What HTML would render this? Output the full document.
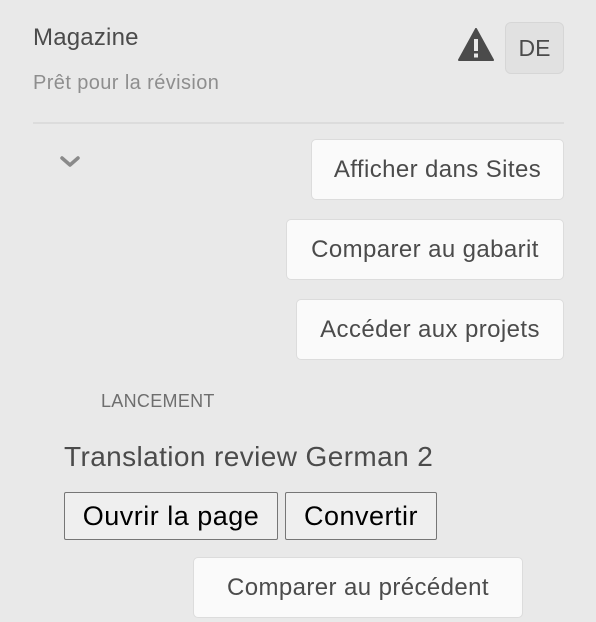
<!DOCTYPE html>
<html><head><meta charset="utf-8"><style>
body{margin:0;width:596px;height:622px;background:#e9e9e9;font-family:"Liberation Sans",sans-serif;position:relative;overflow:hidden;color:#4b4b4b}
.a{position:absolute;white-space:nowrap}
.b{position:absolute;background:#fafafa;border:1px solid #dcdcdc;border-radius:5px;box-sizing:border-box;display:flex;align-items:center;justify-content:center;font-size:24px;color:#4b4b4b;letter-spacing:0.4px}
.n{position:absolute;background:#efefef;border:1px solid #767676;border-radius:2px;box-sizing:border-box;display:flex;align-items:center;justify-content:center;font-size:27px;color:#000;letter-spacing:0.5px}
</style></head><body>
<div class="a" style="left:33px;top:24px;font-size:24px;color:#4b4b4b;letter-spacing:0.2px">Magazine</div>
<div class="a" style="left:33px;top:72px;font-size:20px;color:#8e8e8e;letter-spacing:0.4px">Prêt pour la révision</div>
<svg class="a" style="left:458px;top:28px" width="36" height="33" viewBox="0 0 36 33"><path d="M18 1 L35 32 L1 32 Z" fill="#4b4b4b" stroke="#4b4b4b" stroke-linejoin="round" stroke-width="2"/><rect x="16" y="11" width="4" height="12" fill="#e9e9e9"/><rect x="16" y="25.5" width="4" height="4" fill="#e9e9e9"/></svg>
<div class="a" style="left:505px;top:22px;width:59px;height:52px;background:#e1e1e1;border:1px solid #d6d6d6;border-radius:6px;box-sizing:border-box;display:flex;align-items:center;justify-content:center;font-size:23px">DE</div>
<div class="a" style="left:33px;top:122px;width:531px;height:2px;background:#dcdcdc"></div>
<svg class="a" style="left:59px;top:155px" width="22" height="14" viewBox="0 0 22 14"><path d="M3 3 L11 10 L19 3" fill="none" stroke="#8a8a8a" stroke-width="3.5" stroke-linecap="round" stroke-linejoin="round"/></svg>
<div class="b" style="left:311px;top:139px;width:253px;height:61px">Afficher dans Sites</div>
<div class="b" style="left:286px;top:219px;width:278px;height:61px">Comparer au gabarit</div>
<div class="b" style="left:296px;top:299px;width:268px;height:61px">Accéder aux projets</div>
<div class="a" style="left:101px;top:391px;font-size:18px;color:#6e6e6e;letter-spacing:0.3px">LANCEMENT</div>
<div class="a" style="left:64px;top:441px;font-size:28px;color:#4b4b4b;letter-spacing:0.4px">Translation review German 2</div>
<div class="n" style="left:64px;top:492px;width:214px;height:48px">Ouvrir la page</div>
<div class="n" style="left:285px;top:492px;width:152px;height:48px">Convertir</div>
<div class="b" style="left:193px;top:557px;width:330px;height:61px">Comparer au précédent</div>
</body></html>
